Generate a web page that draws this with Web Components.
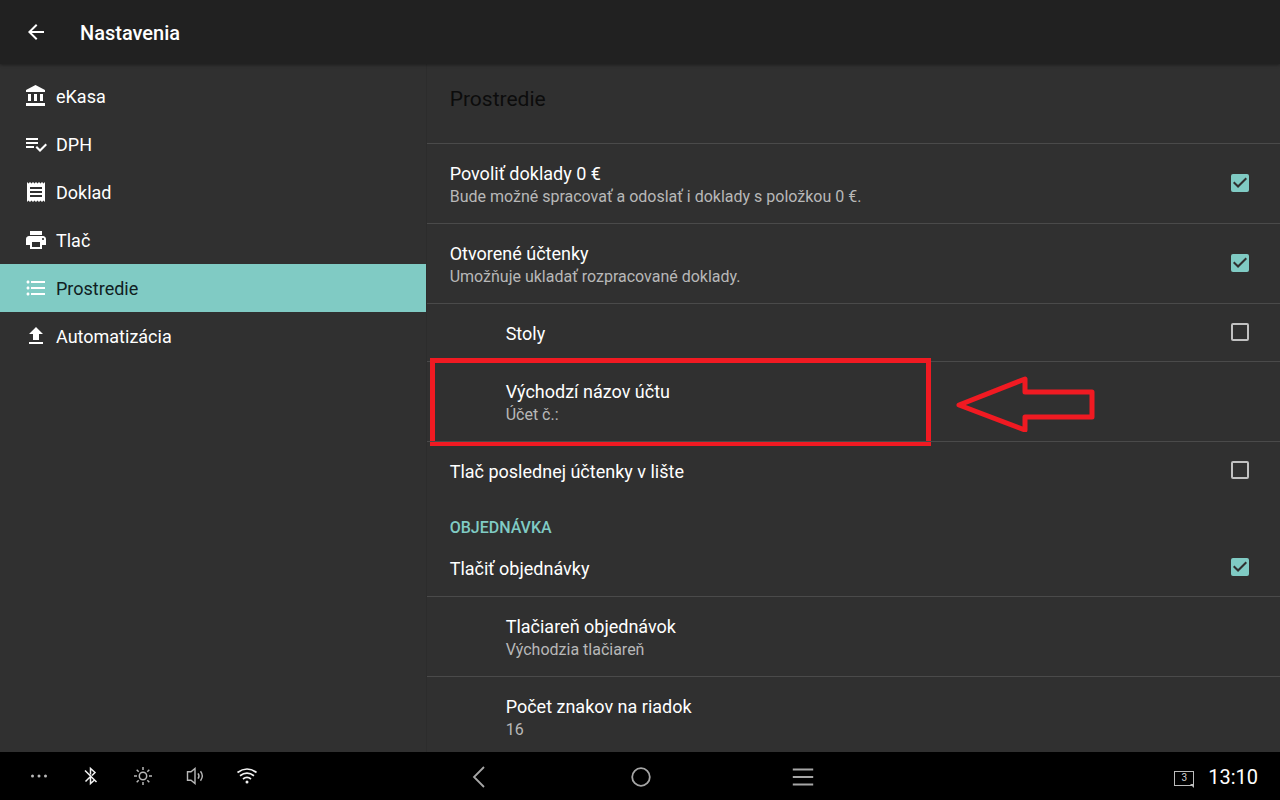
<!DOCTYPE html>
<html lang="sk">
<head>
<meta charset="UTF-8">
<meta name="viewport" content="width=device-width, initial-scale=1">
<title>Nastavenia</title>
<style>
    html, body {
        height: 100%;
        margin: 0;
    }
    body {
        background: #303030;
        color: #fff;
        font-family: Roboto, "Noto Sans", sans-serif;
        font-size: 18px;
        --accent: #80cbc4;
        --bg: #303030;
        --line: #4a4a4a;
        --mark: #f01a22;
    }
</style>
</head>
<body>
<settings-app>
    <app-bar slot="bar">Nastavenia</app-bar>

    <side-menu slot="menu">
        <side-item icon="bank">eKasa</side-item>
        <side-item icon="check-list">DPH</side-item>
        <side-item icon="receipt">Doklad</side-item>
        <side-item icon="print">Tlač</side-item>
        <side-item icon="list" active>Prostredie</side-item>
        <side-item icon="upload">Automatizácia</side-item>
    </side-menu>

    <settings-panel slot="panel" heading="Prostredie">
        <setting-row type="check" checked label="Povoliť doklady 0 €" summary="Bude možné spracovať a odoslať i doklady s položkou 0 €."></setting-row>
        <setting-row type="check" checked label="Otvorené účtenky" summary="Umožňuje ukladať rozpracované doklady."></setting-row>
        <setting-row type="check" nested label="Stoly"></setting-row>
        <setting-row nested label="Východzí názov účtu" summary="Účet č.:"><callout-mark></callout-mark></setting-row>
        <setting-row type="check" label="Tlač poslednej účtenky v lište"></setting-row>
        <setting-category>Objednávka</setting-category>
        <setting-row type="check" checked first label="Tlačiť objednávky"></setting-row>
        <setting-row nested label="Tlačiareň objednávok" summary="Východzia tlačiareň"></setting-row>
        <setting-row nested label="Počet znakov na riadok" summary="16"></setting-row>
    </settings-panel>

    <system-bar slot="system" time="13:10" count="3"></system-bar>
</settings-app>

<script>
    const ICONS = {
        'arrow-back': '<path fill="currentColor" d="M20 11H7.83l5.59-5.59L12 4l-8 8 8 8 1.41-1.41L7.83 13H20v-2z"/>',
        'bank': '<path fill="currentColor" d="M4 10v7h3v-7H4zm6 0v7h3v-7h-3zM2 22h19v-3H2v3zm14-12v7h3v-7h-3zm-4.5-9L2 6v2h19V6l-9.5-5z"/>',
        'check-list': '<path fill="currentColor" d="M14 10H2v2h12v-2zm0-4H2v2h12V6zM2 16h8v-2H2v2zm19.5-4.5L23 13l-6.99 7-4.51-4.5L13 14l3.01 3 5.49-5.5z"/>',
        'receipt': '<path fill="currentColor" d="M18 17H6v-2h12v2zm0-4H6v-2h12v2zm0-4H6V7h12v2zM3 22l1.500-1.500L6 22l1.500-1.500L9 22l1.500-1.500L12 22l1.500-1.500L15 22l1.500-1.500L18 22l1.500-1.500L21 22V2l-1.500 1.500L18 2l-1.500 1.500L15 2l-1.500 1.500L12 2l-1.500 1.500L9 2 7.500 3.500 6 2 4.500 3.500 3 2v20z"/>',
        'print': '<path fill="currentColor" d="M19 8H5c-1.660 0-3 1.340-3 3v6h4v4h12v-4h4v-6c0-1.660-1.340-3-3-3zm-3 11H8v-5h8v5zm3-7c-.550 0-1-.450-1-1s.450-1 1-1 1 .450 1 1-.450 1-1 1zm-1-9H6v4h12V3z"/>',
        'list': '<path fill="currentColor" d="M4 10.500c-.830 0-1.500.670-1.500 1.500s.670 1.500 1.500 1.500 1.500-.670 1.500-1.500-.670-1.500-1.500-1.500zm0-6c-.830 0-1.500.670-1.500 1.500S3.170 7.500 4 7.500 5.500 6.830 5.500 6 4.830 4.500 4 4.500zm0 12c-.830 0-1.500.680-1.500 1.500s.680 1.500 1.500 1.500 1.500-.680 1.500-1.500-.670-1.500-1.500-1.500zM7 19h14v-2H7v2zm0-6h14v-2H7v2zm0-8v2h14V5H7z"/>',
        'upload': '<path fill="currentColor" d="M9 16h6v-6h4l-7-7-7 7h4v6zm-4 2h14v2H5v-2z"/>',
        'more': '<g fill="currentColor"><circle cx="5.500" cy="12" r="1.500"/><circle cx="12" cy="12" r="1.500"/><circle cx="18.500" cy="12" r="1.500"/></g>',
        'bluetooth': '<path fill="none" stroke="currentColor" stroke-width="1.500" d="M6 6.500 17.500 18M6.500 17.500 11.500 12.500V19.500L15.500 16M11.500 10.500V4.500L16 8.500 13 11.500"/>',
        'brightness': '<g fill="none" stroke="currentColor" stroke-width="1.500"><circle cx="12" cy="12" r="3.700"/><path d="M12 3v3M12 18v3M3 12h3M18 12h3M5.700 5.700l2 2M16.300 16.300l2 2M5.700 18.300l2-2M16.300 7.700l2-2"/></g>',
        'volume': '<g fill="none" stroke="currentColor" stroke-width="1.400"><path d="M4.500 7.700h3.500l4-3.200v15l-4-3.200H4.500z"/><path d="M15 9.300q2 2.700 0 5.400M17.500 7.300q3.600 4.700 0 9.400"/></g>',
        'wifi': '<g fill="none" stroke="currentColor" stroke-width="1.700"><path d="M2.500 8.500Q12 1.500 21.500 8.500M5 11.800Q12 6.500 19 11.800M8 15Q12 11.800 16 15"/></g><circle cx="12" cy="18" r="1.500" fill="currentColor"/>',
        'nav-back': '<path fill="none" stroke="currentColor" stroke-width="1.800" d="M17 2 7 12 17 22"/>',
        'nav-home': '<circle cx="12" cy="12" r="8.800" fill="none" stroke="currentColor" stroke-width="1.800"/>',
        'nav-menu': '<path fill="none" stroke="currentColor" stroke-width="1.800" d="M1.800 4.500h20.400M1.800 12h20.400M1.800 19.500h20.400"/>'
    };

    class UiIcon extends HTMLElement {
        constructor() {
            super();
            this.attachShadow({ mode: 'open' });
        }

        connectedCallback() {
            this.shadowRoot.innerHTML = `
                <style>
                    :host { display: block; flex: none; width: 24px; height: 24px; }
                    svg { display: block; width: 100%; height: 100%; }
                </style>
                <svg viewBox="0 0 24 24" aria-hidden="true">${ICONS[this.getAttribute('name')] || ''}</svg>
            `;
        }
    }

    class SettingsApp extends HTMLElement {
        constructor() {
            super();
            this.attachShadow({ mode: 'open' });
            this.shadowRoot.innerHTML = `
                <style>
                    :host { display: flex; flex-direction: column; height: 100vh; overflow: hidden; }
                    main { flex: 1; min-height: 0; display: grid; grid-template-columns: 1fr 2fr; overflow: hidden; }
                </style>
                <slot name="bar"></slot>
                <main>
                    <slot name="menu"></slot>
                    <slot name="panel"></slot>
                </main>
                <slot name="system"></slot>
            `;
        }
    }

    class AppBar extends HTMLElement {
        constructor() {
            super();
            this.attachShadow({ mode: 'open' });
            this.shadowRoot.innerHTML = `
                <style>
                    :host { display: block; position: relative; z-index: 1; box-shadow: 0 1px 3px rgba(0, 0, 0, .4); }
                    header { display: flex; align-items: center; gap: 32px; height: 64px; padding: 0 24px; background: #212121; }
                    button { padding: 0; border: 0; background: none; color: inherit; }
                    h1 { margin: 0; padding-top: 2px; font-size: 20px; line-height: 24px; font-weight: 500; }
                </style>
                <header>
                    <button type="button" aria-label="Späť"><ui-icon name="arrow-back"></ui-icon></button>
                    <h1><slot></slot></h1>
                </header>
            `;
        }
    }

    class SideMenu extends HTMLElement {
        constructor() {
            super();
            this.attachShadow({ mode: 'open' });
            this.shadowRoot.innerHTML = `
                <style>
                    :host { display: block; min-width: 0; }
                    nav { display: flex; flex-direction: column; padding-top: 8px; }
                </style>
                <nav><slot></slot></nav>
            `;
        }
    }

    class SideItem extends HTMLElement {
        constructor() {
            super();
            this.attachShadow({ mode: 'open' });
        }

        connectedCallback() {
            this.shadowRoot.innerHTML = `
                <style>
                    :host { display: block; }
                    a { display: flex; align-items: center; gap: 8px; height: 48px; padding: 0 24px; color: #fff; text-decoration: none; }
                    span { padding-top: 2px; line-height: 24px; }
                    :host([active]) a { background: var(--accent); }
                    :host([active]) span { color: #10201f; }
                </style>
                <a href="#${this.getAttribute('icon')}">
                    <ui-icon name="${this.getAttribute('icon')}"></ui-icon>
                    <span><slot></slot></span>
                </a>
            `;
        }
    }

    class SettingsPanel extends HTMLElement {
        constructor() {
            super();
            this.attachShadow({ mode: 'open' });
        }

        connectedCallback() {
            this.shadowRoot.innerHTML = `
                <style>
                    :host { display: block; min-width: 0; overflow: hidden; box-shadow: -1px 0 0 #2c2c2c; }
                    h2 { margin: 0; padding: 23px 23px 32px; font-size: 21px; line-height: 24px; font-weight: 400; color: #0c0c0c; }
                </style>
                <h2>${this.getAttribute('heading')}</h2>
                <slot></slot>
            `;
        }
    }

    class SettingRow extends HTMLElement {
        constructor() {
            super();
            this.attachShadow({ mode: 'open' });
        }

        connectedCallback() {
            const isCheck = this.getAttribute('type') === 'check';
            const summary = this.getAttribute('summary');
            const tag = isCheck ? 'label' : 'button';
            const checked = this.hasAttribute('checked') ? 'checked' : '';

            this.shadowRoot.innerHTML = `
                <style>
                    :host { display: block; position: relative; border-top: 1px solid var(--line); }
                    :host([first]) { border-top: 0; }
                    .row {
                        display: flex;
                        align-items: center;
                        box-sizing: border-box;
                        width: 100%;
                        padding: 14px 31px 15px 23px;
                        border: 0;
                        background: none;
                        color: #fff;
                        font: inherit;
                        text-align: left;
                    }
                    :host([nested]) .row { padding-left: 79px; }
                    .text { flex: 1; display: flex; flex-direction: column; padding-top: 4px; }
                    .title { line-height: 24px; }
                    .summary { font-size: 16px; line-height: 22px; color: #b8b8b8; }
                    input {
                        appearance: none;
                        display: grid;
                        box-sizing: border-box;
                        width: 18px;
                        height: 18px;
                        margin: 0;
                        border: 2px solid #c1c1c1;
                        border-radius: 2px;
                    }
                    input:checked { border-color: var(--accent); background: var(--accent); }
                    input:checked::before {
                        content: "";
                        background: var(--bg);
                        clip-path: polygon(0 50%, 10% 39%, 36% 64%, 90% 11%, 100% 21%, 36% 85%);
                    }
                </style>
                <${tag} class="row">
                    <span class="text">
                        <span class="title">${this.getAttribute('label')}</span>
                        ${summary ? `<span class="summary">${summary}</span>` : ''}
                    </span>
                    ${isCheck ? `<input type="checkbox" ${checked}>` : ''}
                </${tag}>
                <slot></slot>
            `;
        }
    }

    class SettingCategory extends HTMLElement {
        constructor() {
            super();
            this.attachShadow({ mode: 'open' });
            this.shadowRoot.innerHTML = `
                <style>
                    :host { display: block; }
                    h3 {
                        margin: 0;
                        padding: 18px 23px 0;
                        font-size: 16px;
                        line-height: 22px;
                        font-weight: 500;
                        text-transform: uppercase;
                        color: var(--accent);
                    }
                </style>
                <h3><slot></slot></h3>
            `;
        }
    }

    // red frame with an arrow, drawn over the row it sits in
    class CalloutMark extends HTMLElement {
        constructor() {
            super();
            this.attachShadow({ mode: 'open' });
            this.shadowRoot.innerHTML = `
                <style>
                    :host {
                        display: flex;
                        align-items: center;
                        gap: 23px;
                        position: absolute;
                        inset: -4px 0 -5px 3px;
                        pointer-events: none;
                    }
                    .frame { box-sizing: border-box; width: 501px; height: 100%; border: 5px solid var(--mark); }
                    svg { width: 142px; height: 60px; }
                </style>
                <div class="frame"></div>
                <svg viewBox="0 0 142 60" aria-hidden="true">
                    <path fill="none" stroke="var(--mark)" stroke-width="5" stroke-linejoin="round" d="M5 33 71 7V20H138V45H71V58Z"/>
                </svg>
            `;
        }
    }

    class SystemBar extends HTMLElement {
        constructor() {
            super();
            this.attachShadow({ mode: 'open' });
        }

        connectedCallback() {
            const button = (name, label) => `
                <button type="button" class="${name}" aria-label="${label}"><ui-icon name="${name}"></ui-icon></button>`;

            this.shadowRoot.innerHTML = `
                <style>
                    :host { display: block; position: relative; background: #000; }
                    footer { display: grid; grid-template-columns: 1fr auto 1fr; align-items: center; height: 48px; }
                    div { display: flex; align-items: center; }
                    button { display: flex; justify-content: center; width: 52px; padding: 0; border: 0; background: none; color: #f2f2f2; }
                    .tray { padding-left: 13px; }
                    .more, .brightness, .volume { color: #b8b8b8; }
                    .nav { padding: 2px 0 0 2px; }
                    .nav button { width: 162px; color: #a6a6a6; }
                    .status { justify-content: flex-end; gap: 14px; padding-right: 22px; }
                    .count {
                        display: grid;
                        place-items: center;
                        position: relative;
                        box-sizing: border-box;
                        width: 20px;
                        height: 15px;
                        margin-top: 4px;
                        border: 1px solid #bdbdbd;
                        font: 10px/12px Roboto, sans-serif;
                        color: #d0d0d0;
                    }
                    .count svg { position: absolute; right: -1px; bottom: -3px; width: 4px; height: 4px; }
                    time { padding-top: 2px; font-size: 20px; line-height: 24px; }
                </style>
                <footer>
                    <div class="tray">
                        ${button('more', 'Viac')}
                        ${button('bluetooth', 'Bluetooth')}
                        ${button('brightness', 'Jas')}
                        ${button('volume', 'Hlasitosť')}
                        ${button('wifi', 'Wi-Fi')}
                    </div>
                    <div class="nav">
                        ${button('nav-back', 'Späť')}
                        ${button('nav-home', 'Domov')}
                        ${button('nav-menu', 'Aplikácie')}
                    </div>
                    <div class="status">
                        <span class="count">${this.getAttribute('count')}<svg viewBox="0 0 4 4"><path fill="#bdbdbd" d="M0 0H4V4Z"/></svg></span>
                        <time>${this.getAttribute('time')}</time>
                    </div>
                </footer>
            `;
        }
    }

    customElements.define('ui-icon', UiIcon);
    customElements.define('settings-app', SettingsApp);
    customElements.define('app-bar', AppBar);
    customElements.define('side-menu', SideMenu);
    customElements.define('side-item', SideItem);
    customElements.define('settings-panel', SettingsPanel);
    customElements.define('setting-row', SettingRow);
    customElements.define('setting-category', SettingCategory);
    customElements.define('callout-mark', CalloutMark);
    customElements.define('system-bar', SystemBar);
</script>
</body>
</html>
